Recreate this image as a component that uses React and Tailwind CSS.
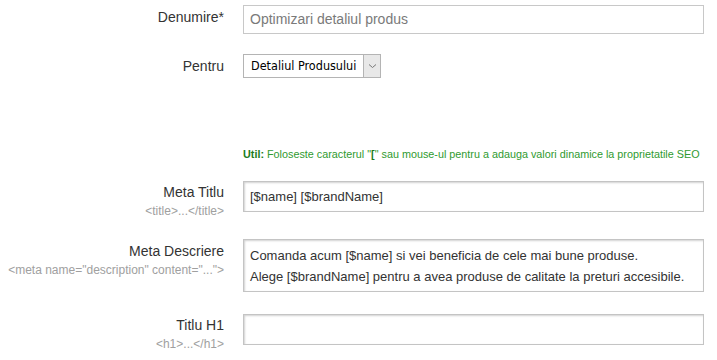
export default function App() {
  const labelCls = "w-[224px] shrink-0 text-right text-[14px] leading-[16px] text-[#333]";
  const subCls = "mt-[4px] text-[12px] leading-[14px] text-[#a0a0a0]";
  return (
    <div className="w-[717px] h-[360px] bg-white overflow-hidden" style={{ fontFamily: '"Liberation Sans", Arial, sans-serif' }}>
      <div className="flex flex-col pt-[5px]">
        {/* Denumire */}
        <div className="flex items-start">
          <div className={labelCls + " pt-[4px]"}>Denumire*</div>
          <div className="ml-[19px] w-[461px] h-[29px] border border-[#c8c8c8] flex items-center px-[6px] text-[14px] text-[#7a7a7a]">
            Optimizari detaliul produs
          </div>
        </div>

        {/* Pentru */}
        <div className="flex items-start mt-[20px]">
          <div className={labelCls + " pt-[4px]"}>Pentru</div>
          <div className="ml-[19px] h-[24px] flex border border-[#b4b4b4] bg-white">
            <div className="flex items-center pl-[7px] pr-[7px] text-[12.5px] text-black" style={{ fontFamily: '"DejaVu Sans Condensed", "Noto Sans", sans-serif' }}>
              Detaliul Produsului
            </div>
            <div className="w-[17px] h-full bg-[#e8e8e8] border-l border-[#b4b4b4] flex items-center justify-center">
              <svg width="9" height="6" viewBox="0 0 9 6" fill="none">
                <path d="M1 1.5 L4.5 4.5 L8 1.5" stroke="#777" strokeWidth="1" />
              </svg>
            </div>
          </div>
        </div>

        {/* Util */}
        <div className="flex mt-[70px]">
          <div className="w-[224px] shrink-0" />
          <div className="ml-[19px] text-[10.8px] leading-[13px] text-[#2f9a2f] whitespace-nowrap">
            <span className="font-bold text-[#1c7c1c]">Util:</span> Foloseste caracterul "<span className="font-bold text-[#1c7c1c]">[</span>" sau mouse-ul pentru a adauga valori dinamice la proprietatile SEO
          </div>
        </div>

        {/* Meta Titlu */}
        <div className="flex items-start mt-[20px]">
          <div className={labelCls + " pt-[3px]"}>
            <div>Meta Titlu</div>
            <div className={subCls}>&lt;title&gt;...&lt;/title&gt;</div>
          </div>
          <div className="ml-[19px] w-[461px] h-[31px] border border-[#c4c4c4] shadow-[inset_1px_1px_2px_rgba(0,0,0,0.18)] flex items-center px-[6px] text-[13px] text-[#333]">
            [$name] [$brandName]
          </div>
        </div>

        {/* Meta Descriere */}
        <div className="flex items-start mt-[21px]">
          <div className={labelCls + " pt-[4px]"}>
            <div>Meta Descriere</div>
            <div className={subCls + " whitespace-nowrap"}>&lt;meta name="description" content="..."&gt;</div>
          </div>
          <div className="ml-[19px] w-[461px] h-[53px] border border-[#c4c4c4] shadow-[inset_1px_1px_2px_rgba(0,0,0,0.18)] pt-[5px] px-[6px] text-[13px] leading-[21px] text-[#333]">
            <div>Comanda acum [$name] si vei beneficia de cele mai bune produse.</div>
            <div>Alege [$brandName] pentru a avea produse de calitate la preturi accesibile.</div>
          </div>
        </div>

        {/* Titlu H1 */}
        <div className="flex items-start mt-[22px]">
          <div className={labelCls + " pt-[3px]"}>
            <div>Titlu H1</div>
            <div className={subCls}>&lt;h1&gt;...&lt;/h1&gt;</div>
          </div>
          <div className="ml-[19px] w-[461px] h-[31px] border border-[#c4c4c4] shadow-[inset_1px_1px_2px_rgba(0,0,0,0.18)]" />
        </div>
      </div>
    </div>
  );
}
